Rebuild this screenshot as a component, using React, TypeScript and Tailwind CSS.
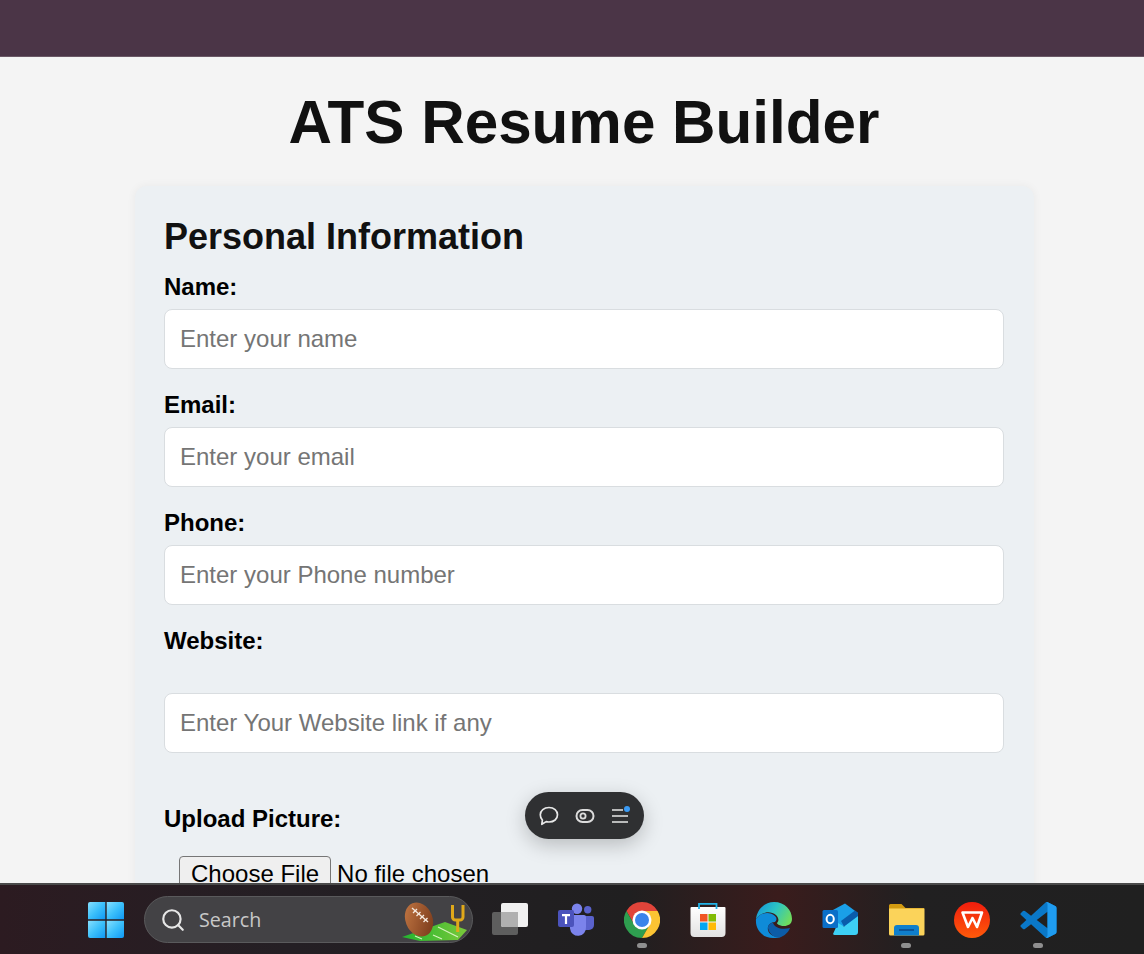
import React from "react";
import { Search } from "lucide-react";

function Field({ label, placeholder, labelGap = "mb-[8px]", rowGap = "mb-[22px]" }: { label: string; placeholder: string; labelGap?: string; rowGap?: string }) {
  return (
    <div className={rowGap}>
      <label className={`block text-[24px] leading-[28px] font-bold text-black ${labelGap}`}>{label}</label>
      <input
        type="text"
        placeholder={placeholder}
        className="block w-full h-[60px] px-[15px] bg-white border border-[#d9dde0] rounded-[8px] text-[24px] placeholder:text-[#757575] outline-none"
      />
    </div>
  );
}

function WindowsIcon() {
  return (
    <svg width="36" height="36" viewBox="0 0 36 36">
      <defs>
        <linearGradient id="win" x1="0" y1="0" x2="1" y2="1">
          <stop offset="0" stopColor="#86e0ff" />
          <stop offset="0.5" stopColor="#3cc0fb" />
          <stop offset="1" stopColor="#0f98f5" />
        </linearGradient>
      </defs>
      <path d="M2 0h15.300v17.300H0V2a2 2 0 0 1 2-2z" fill="url(#win)" />
      <path d="M18.700 0H34a2 2 0 0 1 2 2v15.300H18.700z" fill="url(#win)" />
      <path d="M0 18.700h17.300V36H2a2 2 0 0 1-2-2z" fill="url(#win)" />
      <path d="M18.700 18.700H36V34a2 2 0 0 1-2 2H18.700z" fill="url(#win)" />
    </svg>
  );
}

function FootballArt() {
  return (
    <svg width="70" height="42" viewBox="0 0 70 42" className="absolute right-[2px] top-[3px]">
      <defs>
        <linearGradient id="ball" x1="0" y1="0" x2="1" y2="1">
          <stop offset="0" stopColor="#c67a45" />
          <stop offset="1" stopColor="#733417" />
        </linearGradient>
        <linearGradient id="field" x1="0" y1="0" x2="1" y2="0">
          <stop offset="0" stopColor="#22b52f" />
          <stop offset="1" stopColor="#7ac93a" />
        </linearGradient>
      </defs>
      <path d="M2 37 L45 22 L67 30 L58 40 L20 41 Z" fill="url(#field)" />
      <path d="M38 27l20 10M15 36l7 3M33 35l9 4" stroke="#d6f2bd" strokeWidth="1.200" />
      <path d="M57.700 20v12" stroke="#e0a91a" strokeWidth="3" />
      <path d="M52.500 5v12a3 3 0 0 0 3 3h4.500a3 3 0 0 0 3-3V5" fill="none" stroke="#e0a91a" strokeWidth="3" />
      <ellipse cx="19" cy="19.500" rx="13.500" ry="17.500" transform="rotate(-22 19 19.500)" fill="url(#ball)" />
      <path d="M12 8l16 14" stroke="#f5e9df" strokeWidth="1.300" />
      <path d="M13 13l4-4M16.500 16l4-4M20 19l4-4M23.500 22l4-4" stroke="#f5e9df" strokeWidth="1.300" />
    </svg>
  );
}

function TaskViewIcon() {
  return (
    <svg width="38" height="36" viewBox="0 0 38 36">
      <rect x="1" y="10" width="26" height="23" rx="2" fill="#5e5e5e" />
      <rect x="10" y="1" width="27" height="24" rx="2" fill="#f0f0f0" />
      <path d="M10 10h17v15H12a2 2 0 0 1-2-2z" fill="#b0b0b0" />
    </svg>
  );
}

function TeamsIcon() {
  return (
    <svg width="38" height="36" viewBox="0 0 38 36">
      <circle cx="30.700" cy="7.700" r="3.700" fill="#5a62cc" />
      <path d="M27 14h8a2 2 0 0 1 2 2v7a5 5 0 0 1-5 5h-5z" fill="#5a62cc" />
      <circle cx="20" cy="6.700" r="5.200" fill="#7b83eb" />
      <path d="M12 13h15a2 2 0 0 1 2 2v10a8 8 0 0 1-16 1.500z" fill="#7b83eb" />
      <rect x="1" y="8" width="16" height="17" rx="2" fill="#4b53bc" />
      <path d="M5 12h8v2.200h-2.900V22H7.900v-7.800H5z" fill="#fff" />
    </svg>
  );
}

function ChromeIcon() {
  return (
    <svg width="36" height="36" viewBox="0 0 36 36">
      <path d="M18 0A18 18 0 0 1 33.600 9H18A9 9 0 0 0 10.200 22.500L2.400 9A18 18 0 0 1 18 0z" fill="#e0443a" />
      <path d="M2.400 9A18 18 0 0 0 18 36L25.800 22.500A9 9 0 0 1 10.200 22.500z" fill="#2e9e4f" />
      <path d="M33.600 9A18 18 0 0 1 18 36L25.800 22.500A9 9 0 0 0 18 9z" fill="#fcc433" />
      <circle cx="18" cy="18" r="9.500" fill="#fff" />
      <circle cx="18" cy="18" r="7" fill="#3a84ea" />
    </svg>
  );
}

function StoreIcon() {
  return (
    <svg width="36" height="36" viewBox="0 0 36 36">
      <defs>
        <linearGradient id="bag" x1="0" y1="0" x2="0" y2="1">
          <stop offset="0" stopColor="#ffffff" />
          <stop offset="1" stopColor="#e2e2e2" />
        </linearGradient>
      </defs>
      <path d="M1.500 5h33a1 1 0 0 1 1 1v25a4 4 0 0 1-4 4h-27a4 4 0 0 1-4-4V6a1 1 0 0 1 1-1z" fill="url(#bag)" />
      <path d="M9 7V1.800h17.500V7" fill="none" stroke="#22b4e8" strokeWidth="1.800" />
      <rect x="10" y="12" width="7.500" height="7.500" fill="#f05423" />
      <rect x="18.500" y="12" width="7.500" height="7.500" fill="#81bb05" />
      <rect x="10" y="20.500" width="7.500" height="7.500" fill="#05a6f0" />
      <rect x="18.500" y="20.500" width="7.500" height="7.500" fill="#ffba08" />
    </svg>
  );
}

function EdgeIcon() {
  return (
    <svg width="38" height="36" viewBox="0 0 38 36">
      <defs>
        <linearGradient id="edgeTop" x1="0" y1="0.200" x2="1" y2="0.600">
          <stop offset="0" stopColor="#1597d8" />
          <stop offset="0.500" stopColor="#2cc4c4" />
          <stop offset="1" stopColor="#6fdc5f" />
        </linearGradient>
      </defs>
      <path d="M1 17C2 7 10 0 19 0c11 0 18 8 18 17 0 5-4 7-8 7-4 0-7-2-7-3 2-2 2-5-1-8C15 8 6 10 1 17z" fill="url(#edgeTop)" />
      <path d="M1 17c5-7 14-8 19-3 2 2 2 4 0 6-5 0-8 4-7 8 1 5 7 8 14 6-3 2-6 2-9 2C8 36 0 28 1 17z" fill="#0f8bd8" />
      <path d="M13 26c0-3 2-5 5-5 2 5 9 7 17 5-2 5-6 8-10 9.500-7 .5-11-4.500-12-9.500z" fill="#0c5ca8" />
    </svg>
  );
}

function OutlookIcon() {
  return (
    <svg width="38" height="36" viewBox="0 0 38 36">
      <path d="M10 9 L24 1.500 L37 11 V24 H14z" fill="#1a9fe8" />
      <path d="M12 32 L17 21 L23 24.500 L37 14 V30a3 3 0 0 1-3 3H14a2 2 0 0 1-2-1z" fill="#3dd0f5" />
      <path d="M20 19 L34 8.500 L37 11 V14 L23 24.500z" fill="#0a5cab" />
      <rect x="1.500" y="8" width="15.500" height="18" rx="1.500" fill="#0a6fc8" />
      <ellipse cx="9.200" cy="17" rx="3.600" ry="4.200" fill="none" stroke="#fff" strokeWidth="2" />
    </svg>
  );
}

function ExplorerIcon() {
  return (
    <svg width="38" height="36" viewBox="0 0 38 36">
      <path d="M3.500 2h11l4 4H37v8H2V3.500A1.500 1.500 0 0 1 3.500 2z" fill="#d29a10" />
      <path d="M2 6.500h35.500V32a1.500 1.500 0 0 1-1.500 1.500H3.500A1.500 1.500 0 0 1 2 32z" fill="#fbd35a" />
      <path d="M7 33.500V26a3 3 0 0 1 3-3h19a3 3 0 0 1 3 3v7.500z" fill="#0f7fcc" />
      <path d="M12 28h15" stroke="#0a4c8c" strokeWidth="1.600" />
    </svg>
  );
}

function WpsIcon() {
  return (
    <svg width="36" height="36" viewBox="0 0 36 36">
      <defs>
        <linearGradient id="wps" x1="0" y1="0" x2="0" y2="1">
          <stop offset="0" stopColor="#f01d0d" />
          <stop offset="1" stopColor="#ff5a0a" />
        </linearGradient>
      </defs>
      <circle cx="18" cy="18" r="18" fill="url(#wps)" />
      <path d="M8.500 10.500H28L23 25l-4.500-9-4.500 9z" fill="none" stroke="#fff" strokeWidth="2.600" strokeLinejoin="round" />
    </svg>
  );
}

function VSCodeIcon() {
  return (
    <svg width="37" height="36" viewBox="0 0 100 100">
      <path
        fillRule="evenodd"
        d="M70.900 99.300a6.200 6.200 0 0 0 4.960-.19l20.600-9.900a6.250 6.250 0 0 0 3.540-5.630V16.400a6.250 6.250 0 0 0-3.540-5.630L75.830.87a6.220 6.220 0 0 0-7.100 1.210L29.350 38.040 12.180 25a4.160 4.160 0 0 0-5.320.24l-5.500 5a4.170 4.170 0 0 0 0 6.160L16.250 50 1.360 63.600a4.170 4.170 0 0 0 0 6.160l5.500 5a4.160 4.160 0 0 0 5.320.24l17.170-13.040L68.730 97.920a6.220 6.220 0 0 0 2.170 1.380zM75.020 27.300 45.110 50 75.020 72.700V27.300z"
        fill="#0a78c8"
      />
      <path d="M71 .3 75.830.87l20.630 9.900a6.250 6.250 0 0 1 3.540 5.630v67.180a6.250 6.250 0 0 1-3.540 5.630l-20.600 9.900a6.200 6.200 0 0 1-4.960.19C73.500 97.500 75 95 75 92V8c0-3-1.500-6-4-7.700z" fill="#1f9cf0" />
    </svg>
  );
}

const taskApps = [
  { key: "teams", icon: <TeamsIcon />, open: false },
  { key: "chrome", icon: <ChromeIcon />, open: true },
  { key: "store", icon: <StoreIcon />, open: false },
  { key: "edge", icon: <EdgeIcon />, open: false },
  { key: "outlook", icon: <OutlookIcon />, open: false },
  { key: "explorer", icon: <ExplorerIcon />, open: true },
  { key: "wps", icon: <WpsIcon />, open: false },
  { key: "vscode", icon: <VSCodeIcon />, open: true },
];

export default function App() {
  return (
    <div className="relative h-[954px] w-[1144px] overflow-hidden flex flex-col bg-[#f4f4f4] font-['Liberation_Sans',Arial,sans-serif]">
      <header className="h-[57px] shrink-0 bg-[#4b3547] border-b border-[#6a5866]" />

      <main className="flex-1 min-h-0 overflow-hidden">
        <h1 className="pt-[31px] pl-[24px] mb-[29px] text-center text-[60.2px] leading-[69px] font-bold text-[#111]">ATS Resume Builder</h1>
        <section className="w-[899px] ml-[135px] rounded-[12px] bg-[#ecf0f3] pl-[29px] pr-[30px] py-[29px] shadow-[0_0_10px_rgba(0,0,0,0.05)]">
          <h2 className="text-[36px] leading-[41px] font-bold text-[#111] mb-[16px] mt-[1px]">Personal Information</h2>
          <Field label="Name:" placeholder="Enter your name" />
          <Field label="Email:" placeholder="Enter your email" />
          <Field label="Phone:" placeholder="Enter your Phone number" />
          <Field label="Website:" placeholder="Enter Your Website link if any" labelGap="mb-[38px]" rowGap="mb-[52px]" />
          <label className="block text-[24px] leading-[28px] font-bold text-black mb-[8px]">Upload Picture:</label>
          <input
            type="file"
            className="block w-full p-[15px] text-[24px] leading-[28px] text-black file:mr-[6px] file:px-[11px] file:pt-[3px] file:pb-[1px] file:border file:border-solid file:border-[#767676] file:rounded-[4px] file:bg-[#efefef] file:text-black"
          />
        </section>
      </main>

      <div className="absolute left-[525px] top-[792px] w-[119px] h-[47px] rounded-full bg-[#2f3032] shadow-[0_6px_20px_rgba(0,0,0,0.22)] flex items-center pl-[14px] gap-[16px]">
        <svg width="20" height="20" viewBox="0 0 20 20" fill="none" stroke="#e8e8e8" strokeWidth="1.700">
          <path d="M10 1.500c5 0 8.500 3 8.500 7.300S15 16 10 16c-1 0-2-.1-2.800-.4L2.800 18.300l.6-4.200C2 12.800 1.300 11 1.300 8.800 1.300 4.500 5 1.500 10 1.500z" strokeLinejoin="round" />
        </svg>
        <svg width="20" height="20" viewBox="0 0 20 20" fill="none" stroke="#dcdcdc" strokeWidth="2">
          <rect x="1.500" y="4" width="17" height="12" rx="6" />
          <circle cx="8" cy="10" r="2.600" strokeWidth="1.800" />
        </svg>
        <div className="relative">
          <svg width="18" height="20" viewBox="0 0 18 20" fill="none" stroke="#e8e8e8" strokeWidth="1.700">
            <path d="M1 4h11M1 10h16M1 16h16" />
          </svg>
          <span className="absolute right-[-1px] top-[0px] w-[6px] h-[6px] rounded-full bg-[#3b9bf5]" />
        </div>
      </div>

      <footer className="relative h-[71px] shrink-0 border-t-2 border-[#4a4a4a] flex items-center pl-[73px] bg-[linear-gradient(90deg,#2c1b21_0%,#241f24_25%,#201f20_55%,#3a1c1c_68%,#212021_80%,#202020_100%)]">
        <button className="w-[66px] h-[50px] flex items-center justify-center">
          <WindowsIcon />
        </button>
        <div className="relative ml-[5px] w-[329px] h-[47px] rounded-full bg-[#434245] border border-[#5a5a5c] flex items-center pl-[15px]">
          <Search size={26} color="#e6e6e6" strokeWidth={2} />
          <span className="ml-[13px] text-[19.7px] text-[#c8c8c8] font-['Open_Sans',sans-serif]">Search</span>
          <FootballArt />
        </div>
        <button className="ml-[4px] w-[66px] h-[50px] flex items-center justify-center">
          <TaskViewIcon />
        </button>
        {taskApps.map((app) => (
          <div key={app.key} className="relative w-[66px] h-[50px] flex items-center justify-center">
            {app.icon}
            {app.open && <span className="absolute left-[28px] bottom-[-3px] w-[10px] h-[5px] rounded-full bg-[#8f8f8f]" />}
          </div>
        ))}
      </footer>
    </div>
  );
}
